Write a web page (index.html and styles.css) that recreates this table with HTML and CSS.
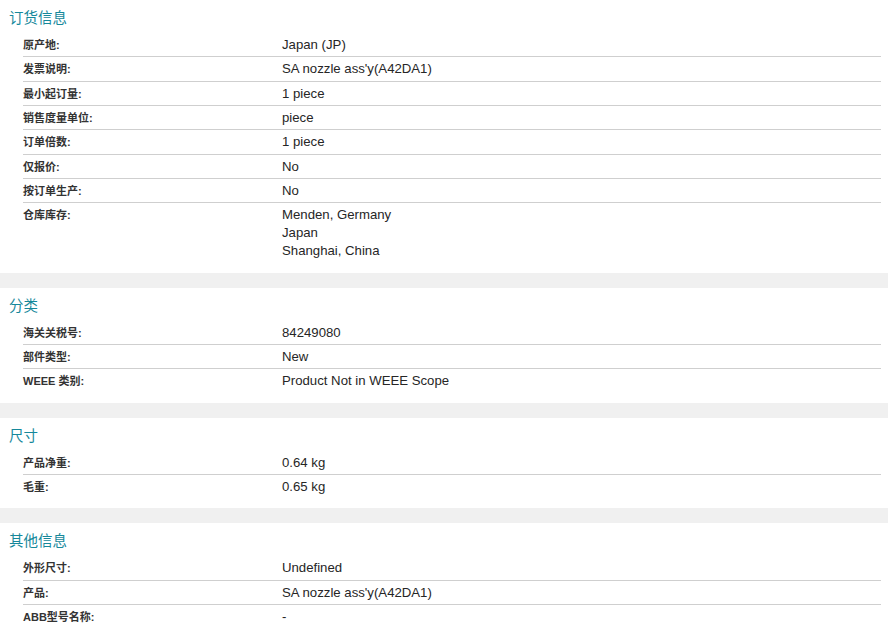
FILE: index.html
```html
<!DOCTYPE html>
<html lang="zh">
<head>
<meta charset="utf-8">
<title>产品信息</title>
<link rel="stylesheet" href="styles.css">
</head>
<body>
<div class="page">
  <section class="card">
    <h2 class="card-title">订货信息</h2>
    <dl class="attrs">
      <div class="row"><dt>原产地:</dt><dd>Japan (JP)</dd></div>
      <div class="row"><dt>发票说明:</dt><dd>SA nozzle ass'y(A42DA1)</dd></div>
      <div class="row"><dt>最小起订量:</dt><dd>1 piece</dd></div>
      <div class="row"><dt>销售度量单位:</dt><dd>piece</dd></div>
      <div class="row"><dt>订单倍数:</dt><dd>1 piece</dd></div>
      <div class="row"><dt>仅报价:</dt><dd>No</dd></div>
      <div class="row"><dt>按订单生产:</dt><dd>No</dd></div>
      <div class="row"><dt>仓库库存:</dt><dd><div>Menden, Germany</div><div>Japan</div><div>Shanghai, China</div></dd></div>
    </dl>
  </section>
  <section class="card">
    <h2 class="card-title">分类</h2>
    <dl class="attrs">
      <div class="row"><dt>海关关税号:</dt><dd>84249080</dd></div>
      <div class="row"><dt>部件类型:</dt><dd>New</dd></div>
      <div class="row"><dt>WEEE 类别:</dt><dd>Product Not in WEEE Scope</dd></div>
    </dl>
  </section>
  <section class="card">
    <h2 class="card-title">尺寸</h2>
    <dl class="attrs">
      <div class="row"><dt>产品净重:</dt><dd>0.64 kg</dd></div>
      <div class="row"><dt>毛重:</dt><dd>0.65 kg</dd></div>
    </dl>
  </section>
  <section class="card card-last">
    <h2 class="card-title">其他信息</h2>
    <dl class="attrs">
      <div class="row"><dt>外形尺寸:</dt><dd>Undefined</dd></div>
      <div class="row"><dt>产品:</dt><dd>SA nozzle ass'y(A42DA1)</dd></div>
      <div class="row"><dt>ABB型号名称:</dt><dd>-</dd></div>
    </dl>
  </section>
</div>
</body>
</html>
```

FILE: styles.css
```css
html, body {
  margin: 0;
  padding: 0;
  background: #f0f0f0;
}

body {
  font-family: "Liberation Sans", Arial, "Noto Sans CJK SC", sans-serif;
  color: #333;
}

.page {
  display: flex;
  flex-direction: column;
  gap: 15px;
}

.card {
  background: #ffffff;
  padding: 0 7px 9px 9px;
}

.card-last {
  padding-bottom: 30px;
}

.card-title {
  margin: 0;
  padding: 7px 0 6px 0;
  font-size: 14.5px;
  line-height: 20px;
  font-weight: normal;
  color: #16889b;
  font-family: "Noto Sans CJK SC", "Liberation Sans", sans-serif;
}

.attrs {
  margin: 0 0 0 14px;
  padding: 0;
}

.row {
  display: grid;
  grid-template-columns: 259px 1fr;
  padding: 3px 0 2.33px 0;
  border-bottom: 1px solid #cfcfcf;
}

.row:last-child {
  border-bottom-color: transparent;
}

.row dt {
  margin: 0;
  font-size: 11px;
  line-height: 18px;
  font-weight: bold;
  color: #333;
  font-family: "Liberation Sans", Arial, "Noto Sans CJK SC", sans-serif;
}

.row dd {
  margin: 0;
  font-size: 13.2px;
  line-height: 18px;
  color: #262626;
}
```
